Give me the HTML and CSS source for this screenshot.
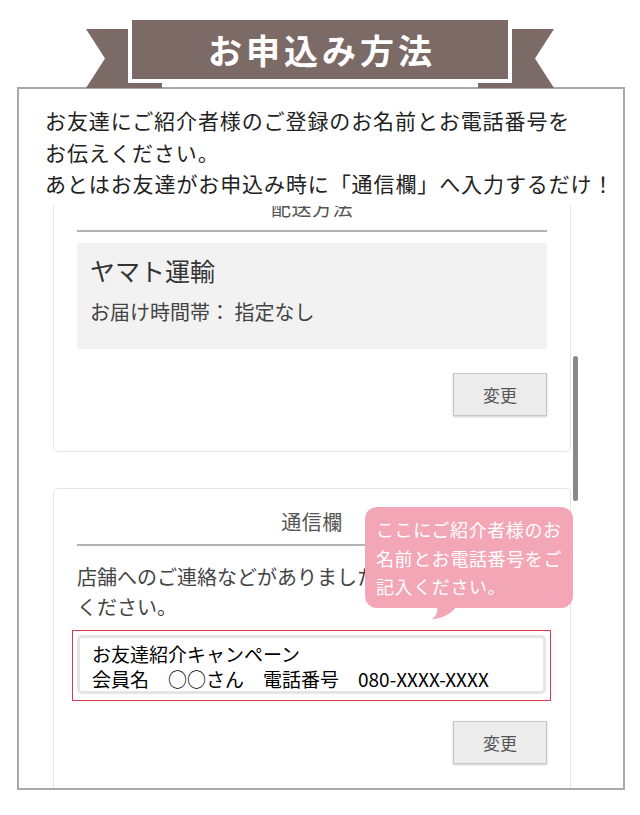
FILE: index.html
```html
<!DOCTYPE html>
<html lang="ja">
  <head>
    <meta charset="UTF-8" />
    <meta name="viewport" content="width=device-width, initial-scale=1.0"/>
    <title>お申込み方法</title>
    <link rel="stylesheet" href="styles.css">
  </head>
  <body>

    <!-- タイトルのリボン -->
    <header class="ribbon">
      <div class="ribbon-box">
        <h1>お申込み方法</h1>
      </div>
    </header>

    <div class="frame">
      <p class="intro">お友達にご紹介者様のご登録のお名前とお電話番号を<br>お伝えください。<br>あとはお友達がお申込み時に「通信欄」へ入力するだけ！</p>

      <!-- スマホ画面のキャプチャ部分 -->
      <div class="screen">
        <section class="card">
          <h2 class="card-title">配送方法</h2>
          <div class="delivery">
            <p class="carrier">ヤマト運輸</p>
            <p class="time">お届け時間帯： 指定なし</p>
          </div>
          <div class="actions">
            <button class="btn">変更</button>
          </div>
        </section>

        <section class="card">
          <h2 class="card-title">通信欄</h2>
          <p class="note-text">店舗へのご連絡などがありましたらこちらにご記入<br>ください。</p>
          <div class="note-box">
            <div class="note-field">お友達紹介キャンペーン<br>会員名　○○さん　電話番号　080-XXXX-XXXX</div>
          </div>
          <div class="actions">
            <button class="btn">変更</button>
          </div>

          <!-- 吹き出し -->
          <div class="tip">
            ここにご紹介者様のお<br>名前とお電話番号をご<br>記入ください。
            <svg class="tip-tail" width="26" height="14" viewBox="0 0 26 14">
              <path d="M5 0 H25 C20 7 12 12 0 13.5 C5 9 6 5 5 0 Z" fill="#f2a6b6"/>
            </svg>
          </div>
        </section>
      </div>

      <div class="scrollbar"></div>
    </div>

  </body>
</html>
```

FILE: styles.css
```css
body {
  margin: 0;
  background-color: #fff;
  font-family: "Noto Sans CJK JP", "Noto Sans", sans-serif;
}

p {
  margin: 0;
}

/* リボン */
.ribbon {
  position: relative;
  z-index: 2;
  height: 87px;
  display: flex;
  justify-content: center;
}

.ribbon-box {
  position: relative;
  width: 376px;
  height: 59px;
  margin-top: 20px;
  background-color: #7c6a67;
  box-shadow: 0 0 0 4px #fff;
  display: flex;
  align-items: center;
  justify-content: center;
}

.ribbon-box::before,
.ribbon-box::after {
  content: "";
  position: absolute;
  top: 9px;
  width: 76px;
  height: 59px;
  background-color: #7c6a67;
  z-index: -1;
}

.ribbon-box::before {
  left: -46px;
  clip-path: polygon(0 0, 100% 0, 100% 100%, 0 100%, 19px 50%);
}

.ribbon-box::after {
  right: -46px;
  clip-path: polygon(0 0, 100% 0, calc(100% - 19px) 50%, 100% 100%, 0 100%);
}

.ribbon-box h1 {
  margin: 0;
  padding-left: 4px;
  color: #fff;
  font-size: 34px;
  font-weight: 700;
  letter-spacing: 4px;
  line-height: 1;
}

/* 枠 */
.frame {
  position: relative;
  width: 604px;
  height: 699px;
  margin-left: 17px;
  border: 2px solid #a9a9a9;
  overflow: hidden;
}

.intro {
  position: relative;
  z-index: 1;
  padding: 16px 0 6px 26px;
  background-color: #fff;
  color: #222;
  font-size: 21px;
  letter-spacing: 0.9px;
  line-height: 31.5px;
  white-space: nowrap;
}

.screen {
  margin-top: -31.5px;
  padding-left: 34px;
}

.card {
  position: relative;
  box-sizing: border-box;
  width: 518px;
  padding: 0 23px 35px;
  margin-bottom: 36px;
  border: 1px solid #e4e4e4;
  border-radius: 5px;
}

.card-title {
  margin: 0;
  padding: 20px 0 9px;
  border-bottom: 2px solid #b3b3b3;
  color: #555;
  font-size: 20px;
  font-weight: 400;
  line-height: 26px;
  text-align: center;
  letter-spacing: 0.5px;
}

.delivery {
  margin-top: 11px;
  padding: 10px 13px 24px;
  background-color: #f3f2f2;
}

.carrier {
  color: #333;
  font-size: 25px;
  line-height: 34px;
}

.time {
  margin-top: 12px;
  color: #444;
  font-size: 20px;
  line-height: 26px;
}

.actions {
  display: flex;
  justify-content: flex-end;
  margin-top: 24px;
}

.btn {
  width: 94px;
  height: 43px;
  background-color: #ececec;
  border: 1px solid #c6c6c6;
  box-shadow: 0 1px 2px rgba(0, 0, 0, 0.2);
  color: #555;
  font-family: "Noto Sans CJK JP", sans-serif;
  font-size: 17px;
  padding: 0;
}

.note-text {
  margin-top: 16px;
  color: #444;
  font-size: 20px;
  line-height: 30px;
  white-space: nowrap;
}

.note-box {
  margin: 8px -4px 0 -5px;
  padding: 4px 4px 6px 4px;
  border: 1px solid #e3364a;
}

.note-field {
  padding: 3px 12px 0;
  border: 3px solid #e5e5e5;
  border-radius: 5px;
  color: #000;
  font-size: 19px;
  line-height: 25px;
  white-space: nowrap;
}

.note-box + .actions {
  margin-top: 20px;
}

/* 吹き出し */
.tip {
  position: absolute;
  left: 311px;
  top: 18px;
  box-sizing: border-box;
  width: 208px;
  padding: 8px 6px 7px 11px;
  background-color: #f2a6b6;
  border-radius: 12px;
  color: #fff;
  font-size: 18px;
  letter-spacing: 0.6px;
  line-height: 28.5px;
  white-space: nowrap;
}

.tip-tail {
  position: absolute;
  left: 67px;
  top: 99px;
}

.scrollbar {
  position: absolute;
  left: 554px;
  top: 267px;
  width: 5px;
  height: 145px;
  border-radius: 3px;
  background-color: #8a8a8a;
}
```
